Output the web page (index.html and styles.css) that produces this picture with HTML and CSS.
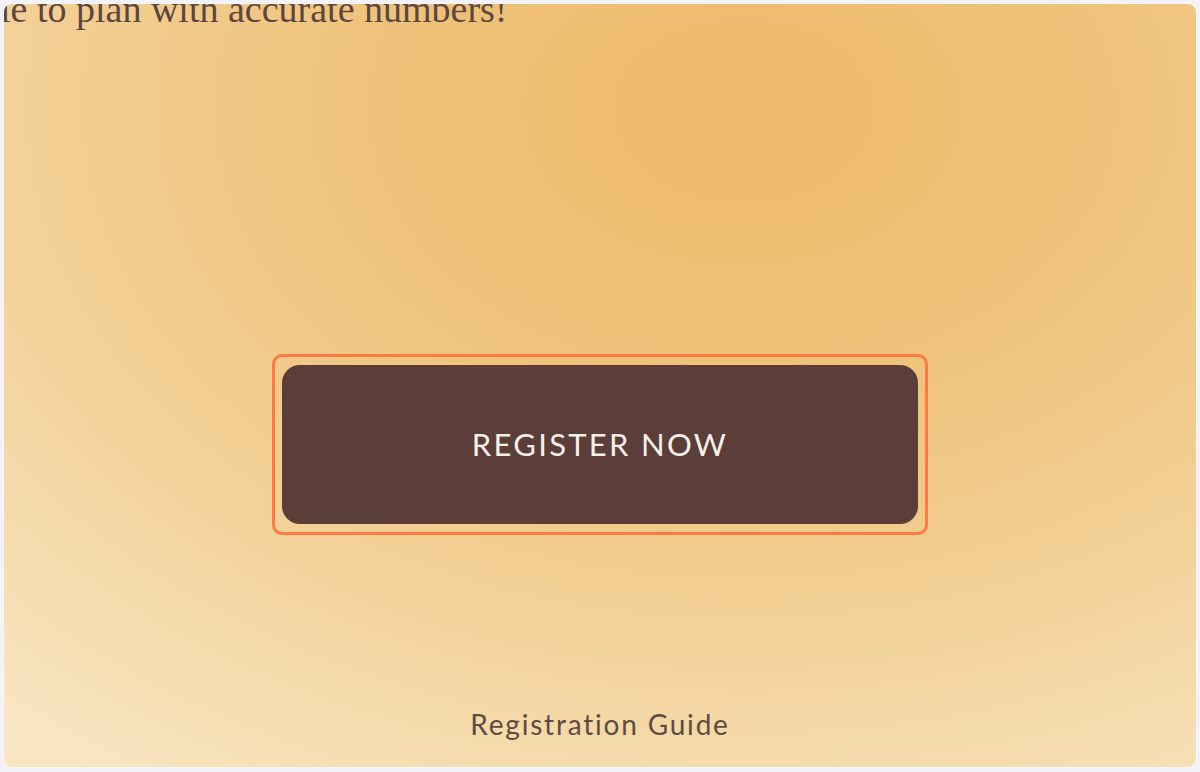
FILE: index.html
```html
<!DOCTYPE html>
<html>
<head>
<meta charset="utf-8">
<link rel="stylesheet" href="styles.css">
</head>
<body>
<div class="frame">
  <div class="card">
    <p class="lead">le to plan with accurate numbers!</p>
    <div class="cta-wrap">
      <div class="highlight">
        <button class="cta">REGISTER NOW</button>
      </div>
    </div>
    <a class="guide">Registration Guide</a>
  </div>
</div>
</body>
</html>
```
FILE: styles.css
```css
html, body {
  margin: 0;
  padding: 0;
  width: 1200px;
  height: 772px;
  overflow: hidden;
  background: #f3f2f8;
}
.frame {
  box-sizing: border-box;
  width: 1200px;
  height: 772px;
  padding: 3px 3px 4px 3px;
}
.card {
  box-sizing: border-box;
  height: 100%;
  border-radius: 9px;
  border: 1px solid #fbfaf9;
  overflow: hidden;
  display: flex;
  flex-direction: column;
  align-items: center;
  background: radial-gradient(ellipse 95% 105% at 62% 14%, #edb96a 0%, #efc47e 38%, #f2cf94 62%, #f8e5c2 100%);
}
.lead {
  align-self: flex-start;
  margin: -17px 0 0 -4px;
  font-family: "Liberation Serif", "DejaVu Serif", serif;
  font-size: 38px;
  line-height: 44px;
  color: #5d463d;
  white-space: nowrap;
}
.cta-wrap {
  flex: 1;
  display: flex;
  align-items: center;
  justify-content: center;
  padding-top: 150px;
}
.highlight {
  border: 3px solid #ff7a42;
  border-radius: 10px;
  padding: 8px 7px;
}
.cta {
  display: flex;
  align-items: center;
  justify-content: center;
  width: 636px;
  height: 159px;
  border: none;
  border-radius: 18px;
  background: #5a3e37;
  color: #f5efea;
  font-family: "Lato", "Open Sans", sans-serif;
  font-size: 31px;
  letter-spacing: 2.3px;
  padding: 0;
}
.guide {
  font-family: "Lato", "Open Sans", sans-serif;
  font-size: 28px;
  letter-spacing: 1.8px;
  color: #5e4b42;
  margin-bottom: 26px;
  line-height: 34px;
}
```
